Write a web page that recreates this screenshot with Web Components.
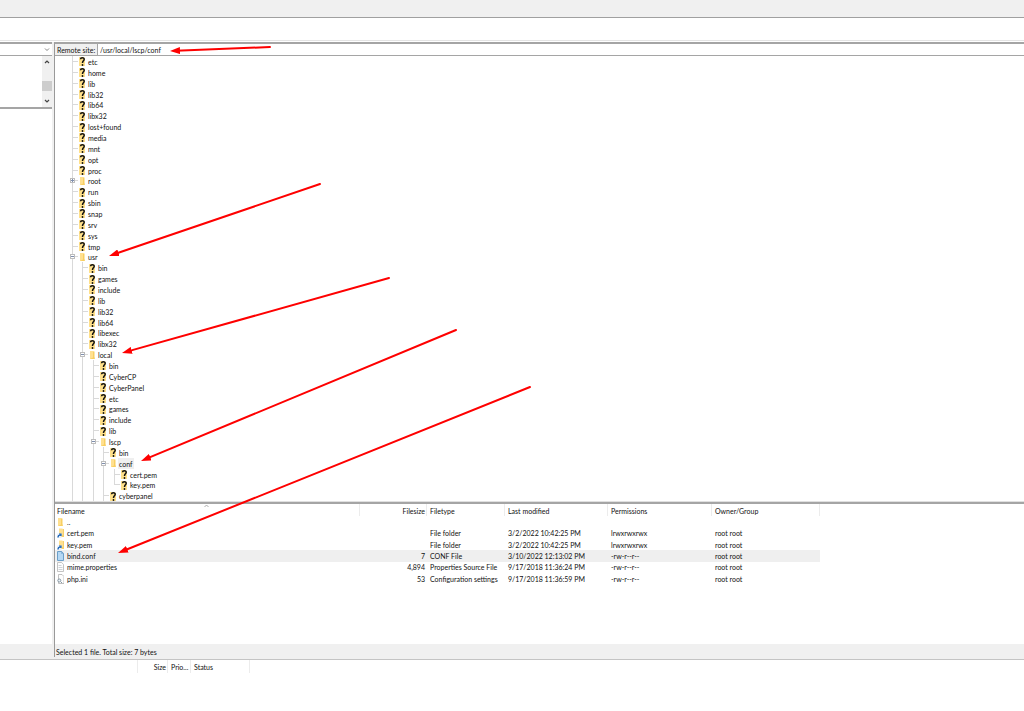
<!DOCTYPE html>
<html lang="en">
<head>
<meta charset="utf-8">
<title>Remote site</title>
<style>
body { margin: 0; background: #fff; color: #111; font: 7px/10px Lato, "Open Sans", sans-serif; }
</style>
</head>
<body>
<ftp-window></ftp-window>
<script>
function define(name, html, setup) {
  const tpl = document.createElement('template');
  tpl.innerHTML = html;
  customElements.define(name, class extends HTMLElement {
    constructor() {
      super();
      this.attachShadow({ mode: 'open' }).append(tpl.content.cloneNode(true));
    }
    connectedCallback() { if (setup) setup(this, this.shadowRoot); }
  });
}

const ICONS = {
  unknown: '<path d="M0 1h5l1 2v7H0z" fill="#ffe08a"/><path d="M1.500 3.200C1.600 1.300 5.200 1.100 5.200 3.200 5.200 4.800 3.500 4.900 3.500 7" fill="none" stroke="#111" stroke-width="1.500"/><circle cx="3.500" cy="9" r=".9" fill="#111"/>',
  folder: '<path d="M1 1h3.500v6.500H6V9H1z" fill="#ffe08f"/><path d="M4 1.500v6L1 9h4.500V1.500z" fill="#f8cf62"/>',
  link: '<path d="M2 0.500h3.500v6.500h1.500v2H2z" fill="#ffe08f"/><path d="M5.500 1v6l-3 2h4.500V1z" fill="#f8d069"/><path d="M0 5.500h4.500V10H0z" fill="#e9f1fb"/><path d="M1 9.500C1 7.500 2 7 3.500 7M2 6h2v2" fill="none" stroke="#1761b5" stroke-width="1.200"/>',
  selected: '<path d="M.5.5h4.200L6.500 2.500v7h-6z" fill="#b5d8f4" stroke="#6b9fc9"/><path d="M4.500.5v2h2" fill="none" stroke="#6b9fc9" stroke-width=".6"/>',
  file: '<path d="M.5.5h4.200L6.500 2.500v7h-6z" fill="#fdfdfd" stroke="#b5b5b5" stroke-width=".8"/><path d="M1.500 3.500h3M1.500 5.500h4M1.500 7.500h4" stroke="#b9c0c5" stroke-width=".7"/>',
  settings: '<path d="M1.500.5h3.500L7 2.500v7H1.500z" fill="#fdfdfd" stroke="#b0b0b0" stroke-width=".8"/><circle cx="2.300" cy="6.500" r="1.500" fill="#eef4f8" stroke="#8495a2" stroke-width="1"/><path d="M4 9l1-1" stroke="#8495a2"/>'
};

define('file-icon', `
<style>:host { display: block; flex: none; width: 7px; height: 10px; } svg { display: block; }</style>
<svg width="7" height="10" viewBox="0 0 7 10" aria-hidden="true"></svg>`,
(host, root) => { root.querySelector('svg').innerHTML = ICONS[host.getAttribute('kind')]; });

define('tree-item', `
<style>
:host { display: flex; flex: 1 1 0; min-height: 0; align-items: center; padding-left: 17px; }
.cell { flex: none; width: 10px; align-self: stretch; display: flex; align-items: center; background: linear-gradient(#d9d9d9, #d9d9d9) 0 0 / 1px 100% no-repeat; }
.cell:nth-of-type(even) { width: 11px; }
.node { flex: none; width: 7px; align-self: stretch; display: flex; align-items: center;
  background: linear-gradient(#d9d9d9, #d9d9d9) 0 0 / 1px 100% no-repeat, linear-gradient(#d9d9d9, #d9d9d9) 0 50% / 6px 1px no-repeat; }
.node.end { background-size: 1px 50%, 6px 1px; }
button { all: unset; box-sizing: border-box; flex: none; width: 5px; height: 5px; margin-left: -2px; border: 1px solid #bdbdbd;
  background: linear-gradient(#7f8fae, #7f8fae) center / 3px 1px no-repeat #fff; }
button.plus { background: linear-gradient(#7f8fae, #7f8fae) center / 3px 1px no-repeat, linear-gradient(#7f8fae, #7f8fae) center / 1px 3px no-repeat #fff; }
.label { margin-left: 1px; padding: 1px 1px 0; white-space: nowrap; }
:host([current]) .label { background: #efefef; }
</style>
<div class="node"></div><file-icon></file-icon><span class="label"><slot></slot></span>`,
(host, root) => {
  const level = Number(host.getAttribute('level'));
  const node = root.querySelector('.node');
  for (let i = 0; i < level; i++) {
    const cell = document.createElement('div');
    cell.className = 'cell';
    node.before(cell);
  }
  if (host.hasAttribute('last')) node.classList.add('end');
  const state = host.getAttribute('state');
  if (state) {
    const b = document.createElement('button');
    b.type = 'button';
    b.className = state;
    b.setAttribute('aria-label', state === 'plus' ? 'Expand' : 'Collapse');
    node.append(b);
  }
  host.setAttribute('role', 'treeitem');
  root.querySelector('file-icon').setAttribute('kind', state ? 'folder' : 'unknown');
});

const TREE = [
  'etc', 'home', 'lib', 'lib32', 'lib64', 'libx32', 'lost+found', 'media', 'mnt', 'opt', 'proc', '+root',
  'run', 'sbin', 'snap', 'srv', 'sys', 'tmp',
  ['usr', ['bin', 'games', 'include', 'lib', 'lib32', 'lib64', 'libexec', 'libx32',
    ['local', ['bin', 'CyberCP', 'CyberPanel', 'etc', 'games', 'include', 'lib',
      ['lscp', ['bin', ['conf', ['cert.pem', '!key.pem']], 'cyberpanel']]]]]]
];

define('remote-tree', `
<style>:host { display: flex; flex-direction: column; min-height: 0; background: #fff; }</style>`,
(host, root) => {
  host.setAttribute('role', 'tree');
  const add = (list, level) => list.forEach(entry => {
    const open = Array.isArray(entry);
    const name = open ? entry[0] : entry;
    const item = document.createElement('tree-item');
    item.setAttribute('level', level);
    item.textContent = name.replace(/^[+!]/, '');
    if (open) item.setAttribute('state', 'minus');
    if (name[0] === '+') item.setAttribute('state', 'plus');
    if (name[0] === '!') item.setAttribute('last', '');
    if (open && name === 'conf') item.setAttribute('current', '');
    root.append(item);
    if (open) add(entry[1], level + 1);
  });
  add(TREE, 0);
});

const FILES = [
  ['folder', '..', '', '', '', '', ''],
  ['link', 'cert.pem', '', 'File folder', '3/2/2022 10:42:25 PM', 'lrwxrwxrwx', 'root root'],
  ['link', 'key.pem', '', 'File folder', '3/2/2022 10:42:25 PM', 'lrwxrwxrwx', 'root root'],
  ['selected', 'bind.conf', '7', 'CONF File', '3/10/2022 12:13:02 PM', '-rw-r--r--', 'root root'],
  ['file', 'mime.properties', '4,894', 'Properties Source File', '9/17/2018 11:36:24 PM', '-rw-r--r--', 'root root'],
  ['settings', 'php.ini', '53', 'Configuration settings', '9/17/2018 11:36:59 PM', '-rw-r--r--', 'root root']
];

define('file-list', `
<style>
:host { display: block; min-height: 0; overflow: hidden; background: #fff; }
table { border-collapse: collapse; table-layout: fixed; width: 765px; height: 80px; }
th, td { padding: 0 0 0 3px; text-align: left; font-weight: 400; white-space: nowrap; vertical-align: middle; }
thead tr { height: 12px; }
th { box-shadow: inset -1px 0 #ececec; padding-top: 2px; }
th:first-child, td:first-child { padding-left: 2px; }
th:nth-child(2), td:nth-child(2) { text-align: right; padding-right: 2px; }
.name { display: flex; gap: 3px; align-items: center; }
.sort { position: relative; }
.sort svg { position: absolute; left: 49%; top: 0; }
.on { background: #efefef; }
</style>
<table>
<colgroup><col style="width:305px"><col style="width:67px"><col style="width:78px"><col style="width:103px"><col style="width:104px"><col style="width:108px"></colgroup>
<thead><tr><th class="sort">Filename<svg width="5" height="4" viewBox="0 0 5 4" aria-hidden="true"><path d="M.5 3 2.500 1l2 2" fill="none" stroke="#999" stroke-width=".8"/></svg></th><th>Filesize</th><th>Filetype</th><th>Last modified</th><th>Permissions</th><th>Owner/Group</th></tr></thead>
<tbody></tbody>
</table>`,
(host, root) => {
  const body = root.querySelector('tbody');
  FILES.forEach(([kind, name, ...rest]) => {
    const tr = body.insertRow();
    if (kind === 'selected') tr.className = 'on';
    tr.insertCell().innerHTML = '<div class="name"><file-icon kind="' + kind + '"></file-icon><span>' + name + '</span></div>';
    rest.forEach(t => { tr.insertCell().textContent = t; });
  });
});

define('site-bar', `
<style>
:host { display: flex; height: 11px; background: #fff; border-bottom: 1px solid #a5a5a5; }
label { background: #f0f0f0; width: 43px; box-sizing: border-box; padding: 1px 0 0 2px; border-right: 1px solid #a5a5a5; white-space: nowrap; }
input { all: unset; flex: 1; min-width: 0; padding-left: 2px; }
</style>
<label for="path">Remote site:</label><input id="path" type="text" value="/usr/local/lscp/conf">`);

define('local-pane', `
<style>
:host { display: flex; flex-direction: column; background: #fff; }
.combo { display: grid; height: 11px; border-bottom: 1px solid #a5a5a5; }
select { all: unset; grid-area: 1 / 1; min-width: 0; }
.combo svg { grid-area: 1 / 1; align-self: center; justify-self: end; margin-right: 2px; pointer-events: none; }
.tree { display: flex; justify-content: flex-end; height: 51px; border-bottom: 2px solid #a5a5a5; }
.scroll { width: 10px; display: flex; flex-direction: column; align-items: center; background: #f0f0f0; padding: 3px 0; box-sizing: border-box; }
.thumb { width: 10px; height: 10px; background: #cdcdcd; margin-top: 17px; margin-bottom: auto; }
.files { flex: 1; }
.status { height: 13px; background: #f0f0f0; }
svg { display: block; }
</style>
<div class="combo"><select aria-label="Local site"></select><svg width="6" height="5" viewBox="0 0 6 5"><path d="M1 1.500 3 3.500 5 1.500" fill="none" stroke="#777" stroke-width=".9"/></svg></div>
<div class="tree"><div class="scroll">
<svg width="6" height="5" viewBox="0 0 6 5"><path d="M1 4 3 2 5 4" fill="none" stroke="#444" stroke-width="1.200"/></svg>
<div class="thumb"></div>
<svg width="6" height="5" viewBox="0 0 6 5"><path d="M1 1 3 3 5 1" fill="none" stroke="#444" stroke-width="1.200"/></svg>
</div></div>
<div class="files"></div><div class="status"></div>`);

define('remote-pane', `
<style>
:host { display: grid; grid-template-rows: auto 446fr auto 140fr auto; min-width: 0; min-height: 0; border-left: 1px solid #999; }
.split { background: #f0f0f0; border-top: 1px solid #e0e0e0; border-bottom: 2px solid #a5a5a5; }
.status { background: #f0f0f0; height: 13px; padding: 3px 0 0 1px; box-sizing: border-box; }
</style>
<site-bar></site-bar><remote-tree></remote-tree><div class="split"></div><file-list></file-list>
<div class="status">Selected 1 file. Total size: 7 bytes</div>`);

define('transfer-queue', `
<style>
:host { display: block; min-height: 51px; background: #fff; border-top: 1px solid #c4c4c4; }
table { border-collapse: collapse; table-layout: fixed; width: 250px; }
th { font-weight: 400; height: 13px; padding: 1px 0 0 3px; text-align: left; box-shadow: inset -1px 0 #ececec; white-space: nowrap; box-sizing: border-box; }
th:nth-child(2) { text-align: right; padding-right: 2px; }
</style>
<table><colgroup><col style="width:138px"><col style="width:30px"><col style="width:23px"><col style="width:59px"></colgroup>
<thead><tr><th></th><th>Size</th><th>Prio...</th><th>Status</th></tr></thead></table>`);

define('arrow-notes', `
<style>:host { display: block; position: absolute; inset: 0; pointer-events: none; } svg { display: block; width: 100%; height: 100%; }</style>
<svg aria-hidden="true"><defs><marker id="head" viewBox="0 0 10 7" refX="10" refY="3.500" markerWidth="10" markerHeight="7" markerUnits="userSpaceOnUse" orient="auto"><path d="M0 0 10 3.500 0 7z" fill="#fe0000"/></marker></defs></svg>`,
(host, root) => {
  const svg = root.querySelector('svg');
  [[270, 47, 170, 51], [320, 184, 109, 256], [389, 278, 122, 353], [456, 330, 141, 461], [530, 387, 118, 553]].forEach(([x1, y1, x2, y2]) => {
    const d = Math.hypot(x2 - x1, y2 - y1), ux = (x2 - x1) / d, uy = (y2 - y1) / d;
    const line = document.createElementNS('http://www.w3.org/2000/svg', 'path');
    line.setAttribute('d', `M${x1} ${y1}L${x2 - ux * 6} ${y2 - uy * 6}`);
    line.setAttribute('stroke', '#fe0000');
    line.setAttribute('stroke-width', '2');
    line.setAttribute('stroke-linecap', 'round');
    const tip = document.createElementNS('http://www.w3.org/2000/svg', 'path');
    tip.setAttribute('d', `M${x1} ${y1}L${x2} ${y2}`);
    tip.setAttribute('marker-end', 'url(#head)');
    svg.append(line, tip);
  });
});

define('ftp-window', `
<style>
:host { display: flex; flex-direction: column; position: relative; height: 100vh; overflow: hidden; background: #fff; }
.toolbar { height: 17px; background: #f0f0f0; border-bottom: 1px solid #a0a0a0; }
.log { height: 22px; border-bottom: 1px solid #e4e4e4; }
.main { flex: 1; min-height: 0; display: grid; grid-template-columns: 52px 1fr; column-gap: 2px; background: #f0f0f0; margin-top: 1px; border-bottom: 2px solid #f0f0f0; }
local-pane, remote-pane { border-top: 2px solid #a5a5a5; }
</style>
<div class="toolbar"></div><div class="log"></div>
<div class="main"><local-pane></local-pane><remote-pane></remote-pane></div>
<transfer-queue></transfer-queue>
<arrow-notes></arrow-notes>`);
</script>
</body>
</html>
